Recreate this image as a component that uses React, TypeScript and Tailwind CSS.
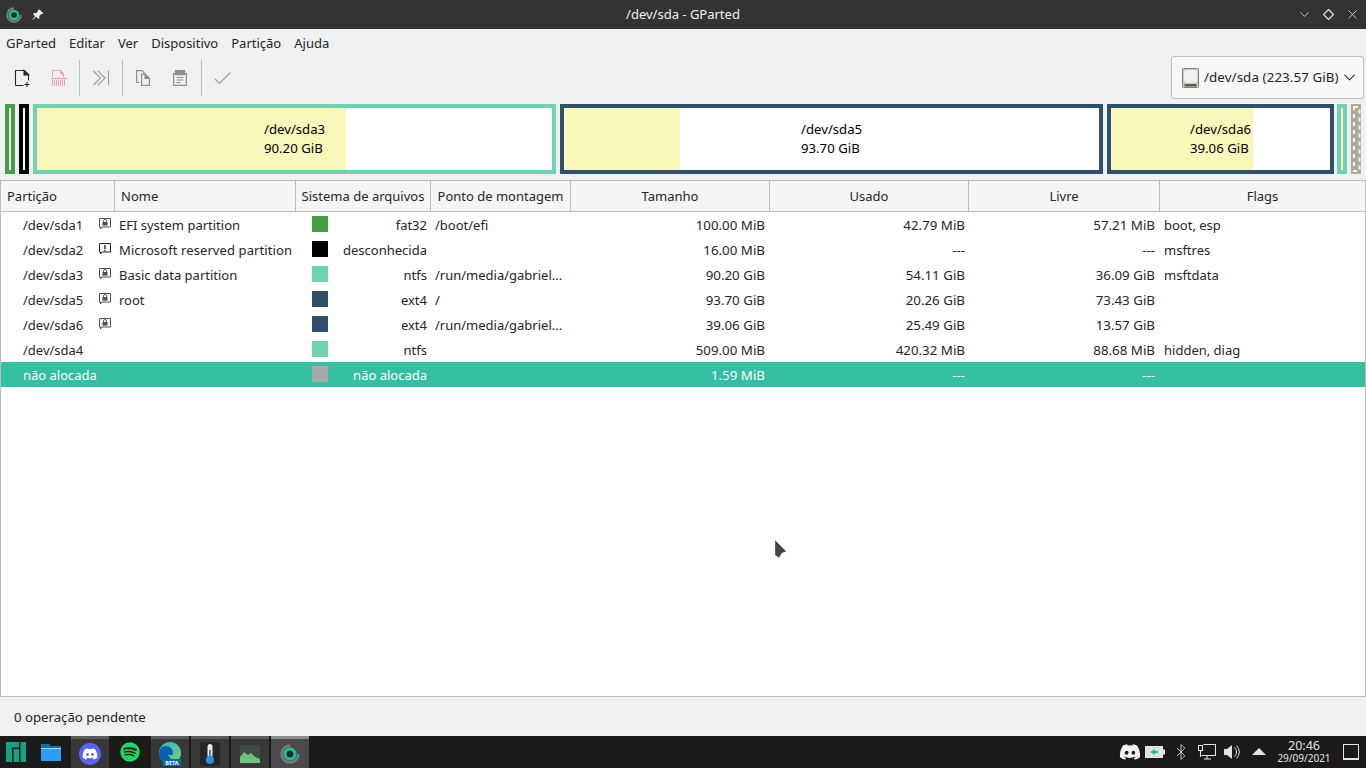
import { Bluetooth, X, ChevronDown } from "lucide-react";
import { FaDiscord, FaSpotify } from "react-icons/fa";

const columns = [
  { label: "Partição", w: "w-[114px]", cls: "text-left pl-[6px]" },
  { label: "Nome", w: "w-[181px]", cls: "text-left pl-[6px]" },
  { label: "Sistema de arquivos", w: "w-[135px]", cls: "text-center" },
  { label: "Ponto de montagem", w: "w-[140px]", cls: "text-center" },
  { label: "Tamanho", w: "w-[199px]", cls: "text-center" },
  { label: "Usado", w: "w-[199px]", cls: "text-center" },
  { label: "Livre", w: "w-[191px]", cls: "text-center" },
  { label: "Flags", w: "flex-1", cls: "text-center" },
];

const rows = [
  { dev: "/dev/sda1", icon: "lock", name: "EFI system partition", color: "bg-[#43a047]", fs: "fat32", mount: "/boot/efi", size: "100.00 MiB", used: "42.79 MiB", free: "57.21 MiB", flags: "boot, esp" },
  { dev: "/dev/sda2", icon: "warn", name: "Microsoft reserved partition", color: "bg-black", fs: "desconhecida", mount: "", size: "16.00 MiB", used: "---", free: "---", flags: "msftres" },
  { dev: "/dev/sda3", icon: "lock", name: "Basic data partition", color: "bg-[#70d2b0]", fs: "ntfs", mount: "/run/media/gabriel...", size: "90.20 GiB", used: "54.11 GiB", free: "36.09 GiB", flags: "msftdata" },
  { dev: "/dev/sda5", icon: "lock", name: "root", color: "bg-[#314e6c]", fs: "ext4", mount: "/", size: "93.70 GiB", used: "20.26 GiB", free: "73.43 GiB", flags: "" },
  { dev: "/dev/sda6", icon: "lock", name: "", color: "bg-[#314e6c]", fs: "ext4", mount: "/run/media/gabriel...", size: "39.06 GiB", used: "25.49 GiB", free: "13.57 GiB", flags: "" },
  { dev: "/dev/sda4", icon: "", name: "", color: "bg-[#70d2b0]", fs: "ntfs", mount: "", size: "509.00 MiB", used: "420.32 MiB", free: "88.68 MiB", flags: "hidden, diag" },
  { dev: "não alocada", icon: "", name: "", color: "bg-[#a9a9a9]", fs: "não alocada", mount: "", size: "1.59 MiB", used: "---", free: "---", flags: "", selected: true },
];

function GpartedLogo({ size = 16 }: { size?: number }) {
  return (
    <svg width={size} height={size} viewBox="0 0 16 16" fill="none">
      <path d="M8 1.300a6.700 6.700 0 1 0 6.700 6.700" stroke="#6f7b7d" strokeWidth="2.200" />
      <circle cx="8" cy="8" r="4" stroke="#1fc3a0" strokeWidth="2.400" />
      <circle cx="8" cy="8" r="2.600" fill="#13302c" />
    </svg>
  );
}

function RowIcon({ kind }: { kind: string }) {
  if (!kind) return null;
  const c = kind === "warn" ? "#232629" : "#4d4f52";
  return (
    <svg width="12" height="12" viewBox="0 0 12 12" fill="none">
      <path d="M.5.5h11v8.500H3L1.500 11V9H.5z" stroke={c} strokeWidth="1" />
      {kind === "lock" ? (
        <>
          <rect x="3.500" y="4" width="5" height="3.600" fill={c} />
          <path d="M4.500 4V3a1.500 1.500 0 0 1 3 0v1" stroke={c} strokeWidth="0.900" />
        </>
      ) : (
        <path d="M6 2v4M6 6.800v1.400" stroke={c} strokeWidth="1.400" />
      )}
    </svg>
  );
}

function ToolButton({ children, wide }: { children: React.ReactNode; wide?: boolean }) {
  return <div className={`${wide ? "w-[38px]" : "w-[37px]"} h-[38px] flex items-center justify-center`}>{children}</div>;
}

function ToolSep() {
  return <div className="w-px h-[36px] bg-[#bcbdbe] mx-[2px]" />;
}

function PartBar({ w, border, used, name, size, textLeft }: { w: string; border: string; used: string; name: string; size: string; textLeft: string }) {
  return (
    <div className={`${w} h-[70px] border-[4px] ${border} bg-white relative`}>
      <div className={`${used} h-full bg-[#f8f8ba]`} />
      <div className={`absolute top-[12px] ${textLeft} leading-[19px] text-black text-left text-[13.2px]`}>
        <div>{name}</div>
        <div>{size}</div>
      </div>
    </div>
  );
}

function SmallBar({ border }: { border: string }) {
  return (
    <div className={`w-[10px] h-[70px] border-[4px] ${border} bg-white shrink-0`}>
      <div className="w-full h-full bg-[#fdfdf0]" />
    </div>
  );
}

function TaskItem({ children, active, spaced }: { children: React.ReactNode; active?: boolean; spaced?: boolean }) {
  return (
    <div className={`w-[38px] h-full flex items-center justify-center border-t-[3px] ${spaced ? "ml-[2px]" : ""} ${active ? "bg-[#4a4a4a] border-[#8a8a8a]" : "bg-[#383838] border-[#5b5b5b]"}`}>
      {children}
    </div>
  );
}

export default function App() {
  return (
    <div className="w-[1366px] h-[768px] flex flex-col relative overflow-hidden bg-[#eff0f1] text-[#232629] text-[13px]" style={{ fontFamily: '"Noto Sans", sans-serif' }}>
      {/* titlebar */}
      <div className="h-[29px] bg-[#333333] flex items-center px-[6px] shrink-0 relative">
        <GpartedLogo />
        <svg className="ml-[9px]" width="14" height="14" viewBox="0 0 14 14" fill="#eee">
          <path d="M8.500 1.500l4 4-1 .6-1.200-.2-2 2 .1 2-1 1-2.200-2.200L2 11.800l-.8-.1 2.900-3.500L2 6.100l1-1 2 .1 2-2-.2-1.200z" />
        </svg>
        <div className="flex-1 ml-[24px] text-center text-[#eff0f1]">/dev/sda - GParted</div>
        <div className="flex items-center gap-[9px] text-[#eff0f1]">
          <ChevronDown size={15} strokeWidth={1.2} />
          <svg width="15" height="15" viewBox="0 0 15 15" fill="none" stroke="currentColor" strokeWidth="1.100"><path d="M7.500 2.500l5 5-5 5-5-5z" /></svg>
          <X size={15} strokeWidth={1.2} />
        </div>
      </div>

      {/* menu */}
      <div className="h-[28px] flex items-center pl-[6px] pt-[1px] gap-[13px] shrink-0">
        {["GParted", "Editar", "Ver", "Dispositivo", "Partição", "Ajuda"].map((m) => (
          <span key={m}>{m}</span>
        ))}
      </div>

      {/* toolbar */}
      <div className="h-[43px] flex items-start shrink-0 relative pl-[3px]">
        <div className="flex items-center h-[42px]">
          <ToolButton>
            <svg width="18" height="18" viewBox="0 0 18 18" fill="none" stroke="#232629" strokeWidth="1.100">
              <path d="M2.500 16.500V1.500h9l4 4v6M2.500 16.500h8" />
              <path d="M11 1.500l4.500 4.500H11z" fill="#232629" />
              <path d="M14 13v5M11.500 15.500h5" />
            </svg>
          </ToolButton>
          <ToolButton>
            <svg width="18" height="18" viewBox="0 0 18 18" fill="none" stroke="#eca3ad" strokeWidth="1">
              <path d="M2.500 8V1.500h8l3 3V8" />
              <path d="M10.500 1.500l3.500 3.500h-3.500z" fill="#eca3ad" />
              <path d="M1 9.500h16" strokeWidth="1.400" />
              <path d="M2.500 11v6M4.500 11v6M6.500 11v6M8.500 11v6M10.500 11v6M12.500 11v6M14.500 11v6" />
            </svg>
          </ToolButton>
          <ToolSep />
          <ToolButton wide>
            <svg width="18" height="18" viewBox="0 0 18 18" fill="none" stroke="#9b9c9e" strokeWidth="1.100">
              <path d="M1.500 2l7 7-7 7M6 2l7 7-7 7M16.500 1.500v15" />
            </svg>
          </ToolButton>
          <ToolSep />
          <ToolButton>
            <svg className="mr-[1px]" width="14" height="16" viewBox="0 0 14 16" fill="none" stroke="#8e8f91" strokeWidth="1.200">
              <path d="M3.500 12.500H.6V.6h5.400l2 2v1.400" />
              <path d="M5.600 4.100h3.400l4.400 4.400v6.900H5.600z" />
              <path d="M9 4.100v4.400h4.400z" fill="#8e8f91" />
            </svg>
          </ToolButton>
          <ToolButton>
            <svg className="mr-[1px]" width="14" height="16" viewBox="0 0 14 16" fill="none" stroke="#8e8f91" strokeWidth="1.200">
              <path d="M.6 3.600h12.800v11.800H.6z" />
              <path d="M2.500.6h9v4h-9z" fill="#8e8f91" />
              <path d="M3.500 7.500h7M3.500 10h7M3.500 12.500h4" />
            </svg>
          </ToolButton>
          <ToolSep />
          <ToolButton>
            <svg width="18" height="14" viewBox="0 0 18 14" fill="none" stroke="#9b9c9e" strokeWidth="1.100"><path d="M1 8l4.500 4.500L16.500 1.500" /></svg>
          </ToolButton>
        </div>
        <div className="absolute left-[1171px] top-[-1px] w-[193px] h-[43px] border border-[#bcbdbe] rounded-[3px] bg-[#f7f7f7] flex items-center pl-[10px] text-[13.33px] tracking-[0.1px]">
          <svg width="17" height="20" viewBox="0 0 17 20">
            <rect x="0.500" y="0.500" width="16" height="19" rx="1" fill="#c9cccd" stroke="#7d8285" />
            <rect x="2" y="2" width="13" height="12.500" rx="2.500" fill="#eff0f1" />
            <rect x="2.500" y="16" width="12" height="2.500" fill="#6b5a3a" />
          </svg>
          <span className="ml-[5px]">/dev/sda (223.57 GiB)</span>
          <ChevronDown size={19} strokeWidth={1.3} className="ml-[1px]" />
        </div>
      </div>

      {/* disk map */}
      <div className="h-[80px] pt-[4px] pl-[5px] flex gap-[4px] shrink-0">
        <SmallBar border="border-[#43a047]" />
        <SmallBar border="border-black" />
        <PartBar w="w-[523px]" border="border-[#70d2b0]" used="w-[309px]" name="/dev/sda3" size="90.20 GiB" textLeft="left-[227px]" />
        <PartBar w="w-[543px]" border="border-[#314e6c]" used="w-[116px]" name="/dev/sda5" size="93.70 GiB" textLeft="left-[237px]" />
        <PartBar w="w-[227px]" border="border-[#314e6c]" used="w-[142px]" name="/dev/sda6" size="39.06 GiB" textLeft="left-[79px]" />
        <div className="flex gap-[4px] -ml-[1px]">
          <div className="w-[10px] h-[70px] border-[4px] border-[#70d2b0] bg-[#f8f8ba] shrink-0" />
          <svg className="shrink-0" width="10" height="70" viewBox="0 0 10 70">
            <rect width="10" height="70" fill="#a9a9a9" />
            <rect x="3" y="3" width="5.500" height="64" fill="none" stroke="#f8f8ba" strokeWidth="2" strokeDasharray="4 4" />
          </svg>
        </div>
      </div>

      {/* table */}
      <div className="h-[517px] border border-[#bcbdbe] bg-white shrink-0 flex flex-col">
        <div className="h-[31px] flex bg-[#f5f5f5] border-b border-[#bcbdbe] shrink-0">
          {columns.map((c) => (
            <div key={c.label} className={`${c.w} ${c.cls} leading-[31px] border-r border-[#bcbdbe] last:border-r-0 whitespace-nowrap`}>
              {c.label}
            </div>
          ))}
        </div>
        {rows.map((r) => (
          <div key={r.dev} className={`h-[25px] pt-[2px] flex items-center shrink-0 whitespace-nowrap ${r.selected ? "bg-[#35bfa4] text-[#fcfcfc]" : ""}`}>
            <div className="w-[98px] pl-[22px]">{r.dev}</div>
            <div className="w-[20px] flex justify-start relative -top-[2px]"><RowIcon kind={r.icon} /></div>
            <div className={`w-[193px] ${r.icon === "warn" ? "tracking-[0.1px]" : ""}`}>{r.name}</div>
            <div className={`w-[16px] h-[16px] shrink-0 relative -top-[2px] ${r.color}`} />
            <div className="w-[102px] text-right pr-[3px]">{r.fs}</div>
            <div className="w-[140px] pl-[5px]">{r.mount}</div>
            <div className="w-[199px] text-right pr-[4px] text-[13.33px]">{r.size}</div>
            <div className="w-[199px] text-right pr-[3px] text-[13.33px]">{r.used}</div>
            <div className="w-[191px] text-right pr-[4px] text-[13.33px]">{r.free}</div>
            <div className="pl-[5px]">{r.flags}</div>
          </div>
        ))}
      </div>

      {/* status */}
      <div className="h-[39px] pt-[2px] flex items-center pl-[14px] shrink-0 text-[13.2px]">0 operação pendente</div>

      {/* taskbar */}
      <div className="h-[32px] bg-[#1a1a1a] flex items-stretch shrink-0 text-[#e4e4e4]">
        <div className="flex items-stretch h-full">
          <div className="w-[31px] flex items-center justify-center">
            <svg width="20" height="20" viewBox="0 0 20 20" fill="#16a085">
              <path d="M0 0h13v5.500H6V20H0zM7.500 7h5.500v13H7.500zM14.500 0H20v20h-5.500z" />
            </svg>
          </div>
          <div className="w-[40px] flex items-center justify-center">
            <svg width="20" height="18" viewBox="0 0 20 18">
              <path d="M0 1h8l2 2h10v3H0z" fill="#1a6fa8" />
              <path d="M0 5h20v13H0z" fill="#2a9df4" />
              <path d="M0 5h20v1H0z" fill="#a8dcff" />
            </svg>
          </div>
          <TaskItem>
            <div className="w-[22px] h-[22px] rounded-full bg-[#5865f2] flex items-center justify-center text-white"><FaDiscord size={16} /></div>
          </TaskItem>
          <div className="w-[42px] flex items-center justify-center">
            <FaSpotify size={20} className="text-[#1ed760]" />
          </div>
          <TaskItem>
            <svg width="24" height="24" viewBox="0 0 24 24">
              <defs>
                <linearGradient id="edge" x1="0" y1="0" x2="1" y2="1">
                  <stop offset="0" stopColor="#2fb5d8" />
                  <stop offset="1" stopColor="#6fd65a" />
                </linearGradient>
              </defs>
              <circle cx="12" cy="11" r="11" fill="url(#edge)" />
              <path d="M1 11a7 7 0 0 1 14 0c0 3-5 3-5 0 0 5 6 9 10 7-3 4-7 4-10 4C5 22 1 17 1 11z" fill="#0f5fb0" />
              <rect x="5" y="17" width="18" height="7" fill="#0c6ca8" />
              <text x="14" y="23" fontSize="5.500" fontWeight="700" fill="#fff" textAnchor="middle" fontFamily="Noto Sans">BETA</text>
            </svg>
          </TaskItem>
          <TaskItem spaced>
            <div className="w-[20px] h-[24px] rounded-[3px] bg-[#252525] flex items-center justify-center">
              <svg width="12" height="22" viewBox="0 0 12 22">
                <rect x="3.500" y="1" width="5" height="14" rx="2.500" fill="#e8e8e8" />
                <circle cx="6" cy="17" r="4" fill="#2a8fe8" />
                <rect x="5" y="7" width="2" height="9" fill="#2a8fe8" />
              </svg>
            </div>
          </TaskItem>
          <TaskItem spaced>
            <svg width="20" height="20" viewBox="0 0 20 20">
              <rect width="20" height="18" y="1" fill="#3f4a44" />
              <path d="M0 13l4-5 4 3 3-2 4 4 5 2v4H0z" fill="#73c27d" />
            </svg>
          </TaskItem>
          <TaskItem active spaced>
            <GpartedLogo size={20} />
          </TaskItem>
        </div>
        <div className="flex-1" />
        <div className="flex items-center pr-[7px] text-[#e4e4e4]">
          <FaDiscord size={22} className="text-[#f0f0f0]" />
          <svg className="ml-[4px]" width="20" height="12" viewBox="0 0 20 12">
            <rect x="0.500" y="0.500" width="17" height="11" fill="#dfe3df" stroke="#e4e4e4" />
            <rect x="18" y="3.500" width="2" height="5" fill="#e4e4e4" />
            <path d="M5 6l5-3v2h3v2h-3v2z" fill="#1abc9c" />
          </svg>
          <Bluetooth size={18} strokeWidth={1.1} className="ml-[7px]" />
          <svg className="ml-[8px]" width="18" height="18" viewBox="0 0 18 18" fill="none" stroke="#e4e4e4" strokeWidth="1.100">
            <path d="M5.500 1.500h12v11h-14M9 12.500v3M6 16h7" />
            <path d="M0.500 2.500h4v5h-4zM2.500 7.500V14" />
          </svg>
          <svg className="ml-[8px]" width="18" height="16" viewBox="0 0 18 16" fill="#e4e4e4">
            <path d="M0 5h3l5-4v14l-5-4H0z" />
            <path d="M10.500 3.500a6 6 0 0 1 0 9M12.500 1.500a9 9 0 0 1 0 13" stroke="#e4e4e4" strokeWidth="1" fill="none" />
          </svg>
          <svg className="ml-[10px]" width="14" height="8" viewBox="0 0 14 8" fill="#e4e4e4"><path d="M7 0l7 7H0z" /></svg>
          <div className="w-[60px] ml-[8px] flex flex-col items-center">
            <span className="text-[12.5px] leading-[12px]">20:46</span>
            <span className="text-[10px] leading-[12px]">29/09/2021</span>
          </div>
          <div className="w-[16px] h-[16px] border border-[#e4e4e4] border-b-2 ml-[9px]" />
        </div>
      </div>

      {/* mouse pointer */}
      <svg className="absolute left-[774px] top-[539px]" width="14" height="22" viewBox="0 0 14 22">
        <path d="M1 1l11.500 11.500L8 14l-3 5-4-3z" fill="#444444" stroke="#ffffff" strokeOpacity="0.600" strokeWidth="0.600" />
      </svg>
    </div>
  );
}
